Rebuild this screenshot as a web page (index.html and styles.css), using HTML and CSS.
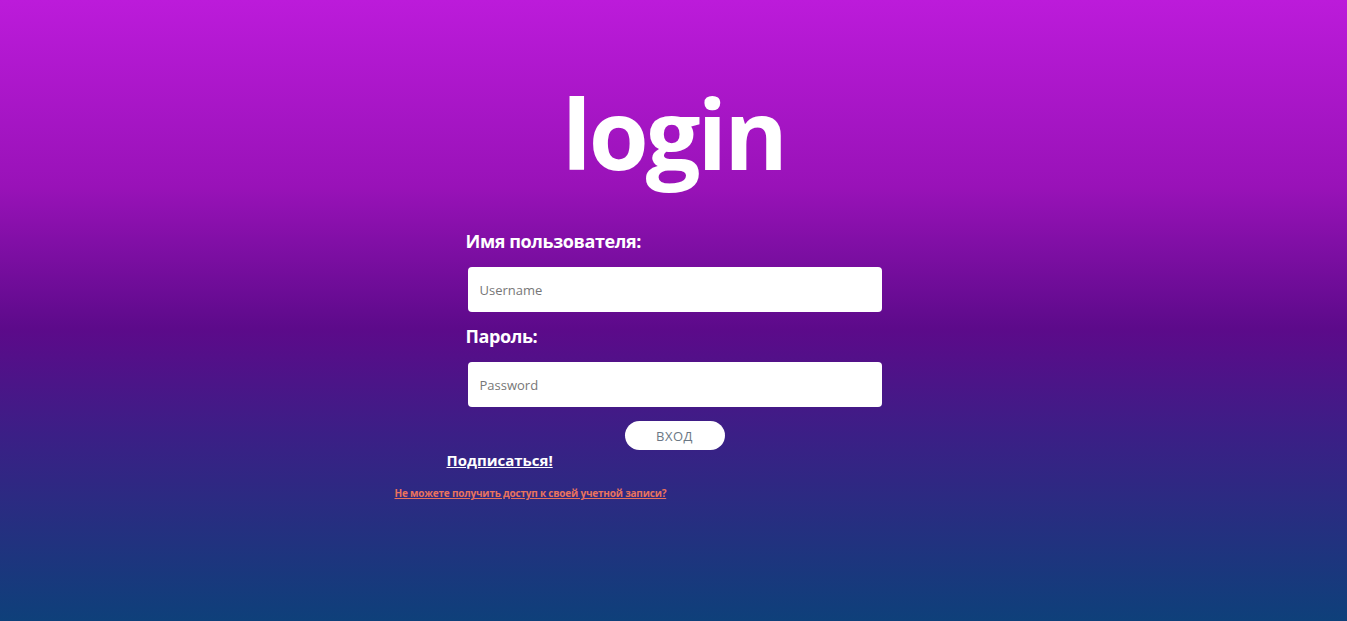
FILE: index.html
```html
<!DOCTYPE html>
<html lang="ru">
<head>
<meta charset="utf-8">
<title>login</title>
<link rel="stylesheet" href="styles.css">
</head>
<body>
<main class="page">
  <h1 class="title">login</h1>
  <form class="form">
    <label class="label" for="u">Имя пользователя:</label>
    <input class="field" id="u" type="text" placeholder="Username">
    <label class="label" for="p">Пароль:</label>
    <input class="field" id="p" type="password" placeholder="Password">
    <button class="btn" type="button">ВХОД</button>
  </form>
  <div class="links">
    <a class="signup" href="#">Подписаться!</a>
    <a class="forgot" href="#">Не можете получить доступ к своей учетной записи?</a>
  </div>
</main>
</body>
</html>
```
FILE: styles.css
```css
html, body {
  margin: 0;
  height: 100%;
}
body {
  background: linear-gradient(180deg, #bc1bda 0%, #9912b8 30%, #5c0a8a 53%, #3b1f86 70%, #0e407a 100%);
  font-family: "Open Sans", "Noto Sans", sans-serif;
  color: #fff;
}
.page {
  display: flex;
  flex-direction: column;
  align-items: center;
  padding-top: 62px;
}
.title {
  margin: 0;
  font-size: 97px;
  font-weight: 700;
  line-height: 140px;
  letter-spacing: -3px;
}
.form {
  width: 420px;
  display: flex;
  flex-direction: column;
  margin-top: 26px;
}
.label {
  font-size: 18px;
  font-weight: 700;
  line-height: 26px;
  letter-spacing: -0.4px;
  margin-left: 2px;
}
.field {
  margin: 13px 0 11px 4px;
  width: 414px;
  height: 45px;
  box-sizing: border-box;
  border: none;
  border-radius: 4px;
  padding: 0 12px;
  font-family: inherit;
  font-size: 13px;
  color: #333;
  background: #fff;
}
.field::placeholder {
  color: #777;
}
.btn {
  align-self: center;
  margin: 3px 0 0 2px;
  width: 100px;
  height: 29px;
  border: none;
  border-radius: 15px;
  background: #fff;
  color: #6b7784;
  font-family: inherit;
  font-size: 13px;
  letter-spacing: 0.5px;
}
.links {
  width: 560px;
  display: flex;
  flex-direction: column;
  align-items: flex-start;
}
.signup {
  margin-top: 1px;
  margin-left: 53px;
  font-size: 15px;
  font-weight: 700;
  color: #fff;
  line-height: 18px;
}
.forgot {
  margin-top: 17px;
  margin-left: 1px;
  font-size: 10px;
  line-height: 14px;
  letter-spacing: -0.2px;
  font-weight: 700;
  color: #e9735c;
}
```
